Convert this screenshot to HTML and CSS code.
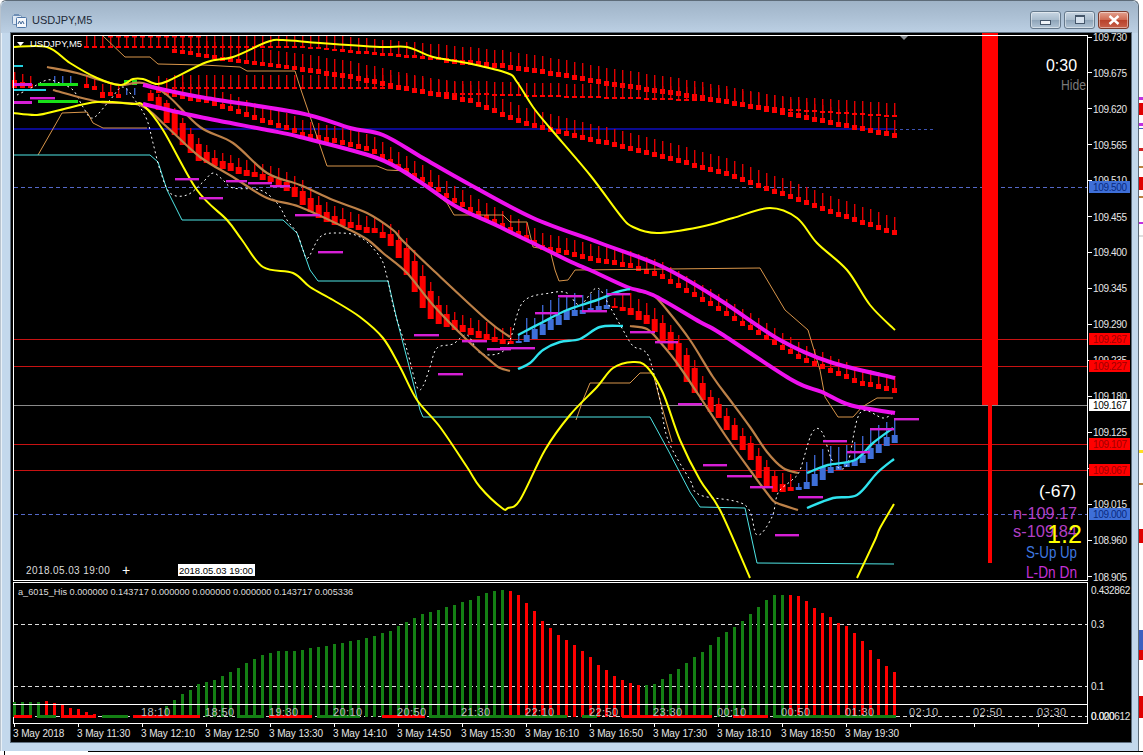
FILE: index.html
```html
<!DOCTYPE html>
<html lang="en">
<head>
<meta charset="utf-8">
<title>USDJPY,M5</title>
<link rel="stylesheet" href="styles.css">
</head>
<body>
<div class="desk">
  <div class="window">
    <header class="titlebar">
      <svg class="app-icon" viewBox="0 0 15 15" width="15" height="15" aria-hidden="true">
        <rect x="0.5" y="2.5" width="9" height="9" rx="1" fill="#dfe9f4" stroke="#6f8fb5"/>
        <rect x="4.5" y="4.5" width="10" height="10" rx="1" fill="#f5f8fc" stroke="#4f76a6"/>
        <path d="M2 1h5v2H2z" fill="#6f8fb5"/>
        <path d="M6 11l1.5-3 1.5 3 1.5-3 1.5 3" fill="none" stroke="#3f6797" stroke-width="1"/>
      </svg>
      <span class="title">USDJPY,M5</span>
      <div class="controls">
        <button class="ctl"><span class="glyph-min"></span></button>
        <button class="ctl"><span class="glyph-max"></span></button>
        <button class="ctl ctl-close"><svg viewBox="0 0 12 10" width="12" height="10" aria-hidden="true"><path d="M1.5 1l9 8M10.5 1l-9 8" stroke="#fff" stroke-width="2.4" fill="none"/></svg></button>
      </div>
    </header>
    <main class="chart">
      <svg id="main" class="pane" width="1120" height="548" viewBox="11 33 1120 548"></svg>
      <svg id="sub" class="pane" width="1120" height="161" viewBox="11 581 1120 161"></svg>
    </main>
  </div>
  <svg id="peek" class="peek" width="4" height="751" viewBox="1139 0 4 751" aria-hidden="true"></svg>
</div>
<div class="bottom-strip"><span class="strip-box"></span><span class="strip-line"></span></div>
<script src="chart.js"></script>
</body>
</html>
```
FILE: styles.css
```css
html, body { margin: 0; padding: 0; background: #fff; }
body { width: 1143px; height: 755px; overflow: hidden; font-family: "Liberation Sans", Arial, sans-serif; }
.desk { display: flex; height: 751px; }
.window {
  width: 1139px; box-sizing: border-box; height: 751px;
  padding: 0 7px 8px 10px;
  background: #c3d8ec;
  border: 1px solid #5d6b78; border-bottom: 0; border-radius: 6px 6px 0 0;
  box-shadow: inset 1px 1px 0 #e8f0f7;
  border-left-color: #b9c4cf;
}
.titlebar {
  height: 32px; margin: 0 -7px 0 -10px; padding: 0 9px 0 11px;
  display: flex; align-items: center; gap: 5px;
  background: linear-gradient(180deg, #9fb3c7 0%, #aec2d6 55%, #bcd0e4 100%);
  border-radius: 6px 6px 0 0;
}
.app-icon { margin-top: 7px; }
.title { font-size: 11px; color: #1d2a38; margin-top: 6px; }
.controls { margin-left: auto; display: flex; gap: 3px; margin-top: 5px; }
.ctl {
  width: 31px; height: 18px; padding: 0; display: flex; align-items: center; justify-content: center;
  border: 1px solid #65798c; border-radius: 3px;
  background: linear-gradient(180deg, #c8d6e3 0%, #a9bccd 48%, #8fa5b9 52%, #b2c5d6 100%);
  box-shadow: inset 0 0 0 1px rgba(255,255,255,.45);
}
.ctl-close { background: linear-gradient(180deg, #e3a18f 0%, #cf6a52 48%, #b8412b 52%, #c8604a 100%); border-color: #7a3a2c; }
.glyph-min { display: block; width: 9px; height: 3px; margin-top: 5px; background: #eef3f8; border: 1px solid #44566a; }
.glyph-max { display: block; width: 8px; height: 6px; border: 1px solid #44566a; border-top-width: 2px; background: #d6e2ee; }
.chart { background: #000; height: 709px; width: 1120px; display: flex; flex-direction: column; outline: 1px solid #5f6f7f; }
.pane { display: block; flex: none; }
.peek { flex: none; }
.bottom-strip { display: flex; align-items: flex-start; height: 4px; background: #fff; }
.strip-box { width: 5px; height: 4px; border-right: 1px solid #000; box-sizing: border-box; }
.strip-line { flex: 1; margin-left: 83px; height: 1px; background: #000; }

/* chart shapes */
.line { fill: none; stroke-linejoin: round; stroke-linecap: butt; }
.magenta { stroke: #ee11ee; stroke-width: 4; }
.yellow { stroke: #ffff00; stroke-width: 2; }
.tan { stroke: #bd8148; stroke-width: 2.2; }
.orange { stroke: #d8954a; stroke-width: 1; }
.tealthin { stroke: #4fe5e5; stroke-width: 1; }
.cyan { stroke: #2fe3ee; stroke-width: 2.4; }
.dots { stroke: #fff; stroke-width: 1; stroke-dasharray: 2 3; }
.bar { fill: #ff0000; }
.wick { fill: #e00000; }
.blue { fill: #3e6fd8; }
.bluewick { fill: #3a62c8; }
.dash { fill: #d61fd6; }
.green { fill: #148014; }
.brightgreen { fill: #18e018; }
.cyanfill { fill: #22d0e0; }
.frame { fill: #fff; }
.rl { stroke: #c81212; stroke-width: 1; shape-rendering: crispEdges; }
.gl { stroke: #8a8a8a; stroke-width: 1; shape-rendering: crispEdges; }
.bd { stroke: #5468c8; stroke-width: 1; stroke-dasharray: 4 3; shape-rendering: crispEdges; }
.navy { stroke: #0a0a90; stroke-width: 2; shape-rendering: crispEdges; }
.navyd { stroke: #3c52b0; stroke-width: 1; stroke-dasharray: 3 3; }
.wd { stroke: #ddd; stroke-width: 1; stroke-dasharray: 4 3; shape-rendering: crispEdges; }
.tick { stroke: #fff; stroke-width: 1; shape-rendering: crispEdges; }
.tri { fill: #8a8f94; }

/* chart text */
.t { font-family: "Liberation Sans", Arial, sans-serif; font-size: 10px; fill: #e6e6e6; }
.t-price { letter-spacing: -0.35px; }
.t-axis { letter-spacing: -0.1px; }
.t-grid { fill: #bdbdbd; font-size: 11px; letter-spacing: .4px; }
.t-sym { fill: #fff; font-size: 9.5px; }
.t-ind { fill: #ddd; font-size: 9.2px; }
.t-tag { fill: #000; letter-spacing: -0.35px; }
.t-tagr { fill: #a00000; letter-spacing: -0.35px; }
.t-tagb { fill: #0a2a80; letter-spacing: -0.35px; }
.t-w { fill: #ddd; font-size: 10px; letter-spacing: .4px; }
.t-box { fill: #000; font-size: 9.5px; }
.plus { fill: #fff; font-size: 14px; }
.b { font-family: "Liberation Sans", sans-serif; font-size: 17px; }
.b-w { fill: #fff; }
.b-h { fill: #7a7a7a; font-size: 15px; }
.b-p { fill: #b23fc4; }
.b-u { fill: #3f78e0; }
.b-d { fill: #c531d6; }
.b-y { fill: #ffff00; font-size: 25px; }
```
FILE: chart.js
```js
var NS = 'http://www.w3.org/2000/svg';
var main = document.getElementById('main');
var sub = document.getElementById('sub');
var peek = document.getElementById('peek');

function add(p, tag, cls, attrs, text) {
  var e = document.createElementNS(NS, tag);
  if (cls) e.setAttribute('class', cls);
  for (var k in attrs) e.setAttribute(k, attrs[k]);
  if (text !== undefined) e.textContent = text;
  p.appendChild(e);
  return e;
}
function rect(p, cls, x, y, w, h) { return add(p, 'rect', cls, { x: x, y: y, width: w, height: h }); }
function hline(p, cls, x1, x2, y) { return add(p, 'line', cls, { x1: x1, x2: x2, y1: y, y2: y }); }
function poly(p, cls, pts) {
  return add(p, 'polyline', 'line ' + cls, { points: pts.map(function (q) { return q[0] + ',' + q[1]; }).join(' ') });
}
/* Catmull-Rom smoothing for the moving-average curves */
function curve(p, cls, pts) {
  var d = 'M' + pts[0][0] + ' ' + pts[0][1];
  for (var i = 0; i < pts.length - 1; i++) {
    var a = pts[i - 1] || pts[i], b = pts[i], c = pts[i + 1], e = pts[i + 2] || c;
    d += 'C' + (b[0] + (c[0] - a[0]) / 6).toFixed(1) + ' ' + (b[1] + (c[1] - a[1]) / 6).toFixed(1) + ' ' +
      (c[0] - (e[0] - b[0]) / 6).toFixed(1) + ' ' + (c[1] - (e[1] - b[1]) / 6).toFixed(1) + ' ' + c[0] + ' ' + c[1];
  }
  return add(p, 'path', 'line ' + cls, { d: d });
}
function text(p, cls, x, y, s, len) {
  var a = { x: x, y: y };
  if (len) { a.textLength = len; a.lengthAdjust = 'spacingAndGlyphs'; }
  return add(p, 'text', cls, a, s);
}
function interp(pts, x) {
  if (x <= pts[0][0]) return pts[0][1];
  for (var i = 1; i < pts.length; i++) {
    if (x <= pts[i][0]) {
      var a = pts[i - 1], b = pts[i];
      return a[1] + (b[1] - a[1]) * (x - a[0]) / (b[0] - a[0]);
    }
  }
  return pts[pts.length - 1][1];
}
function cx(k) { return 14 + 8 * k; }

/* ---------- horizontal levels ---------- */
hline(main, 'navy', 13, 894, 129);
hline(main, 'navyd', 894, 936, 129.5);
hline(main, 'bd', 14, 1087, 187.5);
hline(main, 'bd', 14, 1087, 514.5);
[339.5, 366.5, 444.5, 470.5].forEach(function (y) { hline(main, 'rl', 14, 1087, y); });
hline(main, 'gl', 14, 1087, 405.5);

/* ---------- fractal rows of small candles ---------- */
function row(pts, k0, k1, bh, wick) {
  for (var k = k0; k <= k1; k++) {
    var x = cx(k), y = Math.round(interp(pts, x + .5));
    var h = typeof bh === 'function' ? bh(x) : bh;
    var top = Math.max(36, y - wick);
    rect(main, 'wick', x, top, 1.4, y - top);
    rect(main, 'bar', x - 2, y, 5, h);
  }
}
row([[85, 46], [300, 46], [400, 54], [500, 63], [560, 72], [614, 82], [650, 87], [720, 98], [773, 108], [894, 133]],
  9, 110, function (x) { return x < 340 ? 2 : (x < 440 ? 3 : 5); }, 13);
for (var q = 12; q < 24; q++) rect(main, 'bar', cx(q) - 2, 36, 5, 1.5);
row([[170, 87], [410, 87], [430, 92], [620, 97], [660, 98], [720, 100], [780, 108], [894, 115]],
  20, 110, 2, 12);
row([[170, 48], [230, 58], [300, 67], [345, 73], [400, 85], [470, 98], [517, 118], [550, 127], [613, 142], [667, 155], [733, 173], [773, 188], [833, 210], [894, 230]],
  20, 110, function (x) { return x < 300 ? 4 : 5; }, 13);
row([[150, 85], [180, 94], [206, 98], [233, 107], [263, 118], [287, 125], [303, 132], [343, 140], [373, 148], [400, 165], [423, 177], [447, 193], [470, 207], [493, 218], [517, 230], [543, 245], [567, 250], [593, 257], [630, 263], [660, 273], [700, 295], [750, 325], [800, 355], [860, 380], [894, 388]],
  18, 110, 5, 12);

/* ---------- price candles ---------- */
var reds = [
  [150,93,101,90],[158,97,110,94],[166,103,123,100],[174,112,135,108],[182,123,145,118],[190,134,153,128],[198,144,161,138],
  [206,152,163,145],[214,158,166,150],[222,161,169,153],[230,163,171,155],[238,167,174,158],[246,170,176,160],[254,172,177,162],
  [262,174,180,164],[270,176,182,166],[278,179,186,168],[286,182,191,172],[294,187,197,176],[302,191,205,180],[310,198,212,188],
  [318,205,218,196],[326,212,222,202],[334,216,225,206],[342,219,226,208],[350,222,228,212],[358,225,230,214],[366,227,233,216],
  [374,228,233,218],[382,232,238,222],[390,234,246,224],[398,240,258,230],[406,248,275,238],[414,261,292,250],[422,276,308,265],
  [430,291,319,282],[438,305,324,296],[446,314,327,305],[454,320,330,312],[462,325,332,315],[470,328,335,318],[478,331,338,320],
  [486,334,340,322],[494,337,342,326],[502,339,344,328],[510,341,344,327],
  [614,306,308,298],[622,307,311,293],[630,308,315,293],[638,311,320,299],[646,315,324,303],[654,319,332,308],[662,323,342,315],
  [670,332,350,325],[678,343,367,335],[686,355,382,348],[694,368,393,360],[702,383,400,376],[710,397,412,390],[718,404,418,398],
  [726,416,430,408],[734,425,440,418],[742,436,450,428],[750,443,460,436],[758,456,478,448],[766,467,487,460],[774,476,492,470],
  [782,484,492,473],[790,487,491,474]
];
reds.forEach(function (c) {
  rect(main, 'wick', c[0], c[3], 1.4, c[1] - c[3]);
  rect(main, 'bar', c[0] - 2.3, c[1], 6, c[2] - c[1]);
});
var blues = [
  [518,341,343,335],[526,335,342,318],[534,329,339,318],[542,324,335,305],[550,319,330,300],[558,315,325,298],[566,310,320,295],
  [574,310,316,293],[582,310,314,295],[590,308,312,294],[598,306,310,290],[606,305,309,289],
  [798,487,490,483],[806,482,489,462],[814,474,486,455],[822,467,480,449],[830,467,473,446],[838,466,470,447],[846,463,467,445],
  [854,460,466,442],[862,455,463,436],[870,448,459,429],[878,444,453,425],[886,437,446,422],[894,435,443,418]
];
blues.forEach(function (c) {
  rect(main, 'bluewick', c[0], c[3], 1.4, c[1] - c[3]);
  rect(main, 'blue', c[0] - 2.3, c[1], 6, c[2] - c[1]);
});
/* early bars near the left edge */
[[14,80,88],[22,82,88],[30,84,88],[86,84,88],[94,86,90],[102,92,98],[110,92,96],[118,94,98]].forEach(function (c) {
  rect(main, 'wick', c[0], c[1] - 8, 1.4, 8);
  rect(main, 'bar', c[0] - 2, c[1], 5, c[2] - c[1]);
});
[54, 62, 70].forEach(function (x) { rect(main, 'bluewick', x, 76, 1.4, 9); });
[126, 134].forEach(function (x) { rect(main, 'bluewick', x, 88, 1.4, 7); rect(main, 'brightgreen', x - 2, 80, 5, 5); });

/* ---------- thin lines ---------- */
poly(main, 'orange', [[38,155],[62,113],[87,112],[93,123],[103,128],[147,128]]);
poly(main, 'orange', [[103,36],[125,57],[150,57],[158,64],[203,65],[240,67],[247,71],[295,71],[300,87],[327,166],[377,166],[387,170],[407,171],[427,187],[447,203],[454,215],[503,215],[510,222],[527,222],[533,247],[550,250],[555,270],[559,281],[568,280],[575,270],[760,268],[785,310],[808,330],[820,370],[825,397],[838,417],[853,417],[862,407],[877,398],[893,398]]);
poly(main, 'orange', [[576,420],[583,400],[590,383],[630,383],[640,373],[653,373],[660,400],[672,442]]);
poly(main, 'tealthin', [[13,155],[150,155],[158,162],[167,190],[182,220],[283,220],[297,233],[310,270],[318,281],[388,281],[397,320],[410,370],[420,410],[423,417],[650,417],[668,450],[690,492],[700,507],[745,508],[757,563],[894,564]]);
curve(main, 'dots', [[17,95],[33,87],[47,80],[57,82],[73,90],[83,107],[93,118],[110,100],[123,87],[137,103],[147,120],[153,143],[160,170],[170,193],[187,195],[203,182],[213,173],[223,180],[233,188],[260,190],[277,203],[287,220],[297,233],[303,250],[308,258],[320,237],[337,233],[360,237],[380,257],[387,277],[395,313],[407,350],[417,387],[423,386],[430,367],[437,348],[453,344],[467,335],[480,353],[500,353],[510,340],[523,302],[550,293],[567,293],[580,305],[597,288],[610,307],[623,330],[633,346],[643,350],[650,360],[660,400],[668,440],[690,480],[700,495],[745,505],[757,535],[772,517],[778,493],[792,480],[800,470],[812,433],[822,432],[833,462],[847,465],[860,413],[883,418],[893,413]]);

/* ---------- thick indicator lines ---------- */
curve(main, 'tan', [[47,67],[77,73],[100,80],[120,85],[143,83],[167,95],[200,127],[233,143],[267,173],[300,185],[333,200],[367,213],[393,230],[402,240],[433,270],[487,320],[510,337]]);
curve(main, 'tan', [[53,90],[100,102],[140,105],[167,127],[200,157],[233,177],[267,198],[300,207],[350,230],[368,240],[383,253],[407,273],[433,305],[467,340],[493,363],[500,368],[510,371]]);
curve(main, 'tan', [[637,291],[653,295],[667,310],[690,340],[713,377],[730,400],[750,427],[767,452],[783,468],[798,473]]);
curve(main, 'tan', [[630,326],[647,329],[660,342],[677,363],[700,397],[725,435],[750,470],[770,497],[777,503],[798,510]]);
curve(main, 'yellow', [[13,47],[47,47],[70,63],[97,78],[120,85],[133,79],[143,79],[157,84],[170,80],[207,62],[233,57],[267,42],[283,40],[320,43],[380,47],[407,47],[433,57],[467,63],[507,73],[517,82],[533,107],[550,128],[590,175],[620,215],[633,227],[657,233],[700,227],[733,218],[770,208],[797,218],[817,243],[847,270],[870,305],[895,330]]);
curve(main, 'yellow', [[13,113],[37,115],[60,110],[97,102],[133,104],[143,105],[163,130],[197,190],[227,220],[242,240],[263,267],[293,273],[310,287],[333,300],[360,317],[383,338],[400,367],[417,400],[440,427],[467,467],[480,487],[502,508],[508,508],[520,500],[545,450],[570,415],[597,387],[613,368],[633,362],[647,367],[663,393],[680,440],[700,480],[720,510],[750,578]]);
curve(main, 'yellow', [[857,578],[875,540],[880,528],[894,504]]);
curve(main, 'magenta', [[143,85],[200,97],[300,113],[350,128],[383,135],[423,158],[467,183],[533,218],[600,243],[663,267],[720,300],[780,340],[830,362],[895,378]]);
curve(main, 'magenta', [[143,104],[200,117],[267,130],[300,137],[377,158],[417,180],[457,207],[500,227],[567,260],[590,270],[627,287],[653,295],[700,322],[720,333],[792,380],[822,392],[850,405],[895,413]]);
curve(main, 'cyan', [[518,335],[543,322],[567,310],[597,300],[617,292],[630,289]]);
curve(main, 'cyan', [[518,369],[530,363],[543,350],[560,342],[580,339],[600,327],[623,326]]);
curve(main, 'cyan', [[807,473],[828,465],[855,460],[873,443],[893,428]]);
curve(main, 'cyan', [[807,508],[833,498],[857,495],[877,473],[894,459]]);

/* ---------- short purple level dashes ---------- */
[[175,199,179],[199,223,198],[226,247,181],[248,272,183],[270,290,186],[295,320,215],[318,343,252],[414,439,335],[438,463,374],[462,487,341],[487,511,349],[500,535,348],[535,558,313],[558,582,296],[582,607,311],[607,630,294],[630,655,332],[655,678,342],[678,702,404],[703,727,465],[727,752,476],[750,773,487],[775,799,535],[798,823,497],[823,847,441],[847,870,452],[870,894,429],[894,919,419],[30,55,98]].forEach(function (d) {
  rect(main, 'dash', d[0], d[2] - 1, d[1] - d[0], 2.4);
});
rect(main, 'dash', 14, 83, 18, 3);
rect(main, 'dash', 14, 101, 18, 3);
rect(main, 'brightgreen', 38, 83, 40, 3);
rect(main, 'brightgreen', 38, 100, 40, 3);
rect(main, 'cyanfill', 14, 65, 9, 2);
rect(main, 'cyanfill', 14, 89, 32, 2);

/* ---------- big signal bar ---------- */
rect(main, 'bar', 982, 33, 16, 372);
rect(main, 'bar', 988, 405, 4, 158);

/* ---------- price scale ---------- */
rect(main, 'frame', 13, 35, 1075, 1);
rect(main, 'frame', 13, 35, 1, 546);
rect(main, 'frame', 1087, 35, 1, 546);
rect(main, 'frame', 13, 580, 1075, 1);
var prices = ['109.730','109.675','109.620','109.565','109.510','109.455','109.400','109.345','109.290','109.235','109.180','109.125','109.070','109.015','108.960','108.905'];
var py = [37, 72.5, 108.5, 144.5, 180, 216.5, 252, 288, 324, 360, 396, 432, 468, 504, 540, 576.5];
prices.forEach(function (p, i) {
  hline(main, 'tick', 1088, 1092, Math.floor(py[i]) + .5);
  text(main, 't t-price', 1093, py[i] + 4, p);
});
[[187, 'blue', 't t-tagb', '109.500'], [339, 'bar', 't t-tagr', '109.267'], [366, 'bar', 't t-tagr', '109.227'],
 [405, 'frame', 't t-tag', '109.167'], [444, 'bar', 't t-tagr', '109.107'], [470, 'bar', 't t-tagr', '109.067'],
 [514, 'blue', 't t-tagb', '109.000']].forEach(function (t) {
  rect(main, t[1], 1089, t[0] - 6, 41, 12);
  text(main, t[2], 1093, t[0] + 4, t[3]);
});

/* ---------- chart annotations ---------- */
add(main, 'polygon', 'tri', { points: '900,36 908,36 904,40' });
add(main, 'polygon', 'frame', { points: '17,42 24,42 20.5,46' });
text(main, 't t-sym', 30, 47, 'USDJPY,M5');
text(main, 'b b-w', 1046, 71, '0:30', 31);
text(main, 'b b-h', 1061, 90, 'Hide', 25);
text(main, 'b b-w', 1039, 497, '(-67)', 37);
text(main, 'b b-p', 1013, 519, 'n-109.17', 64);
text(main, 'b b-p', 1013, 537, 's-109.84', 64);
text(main, 'b b-y', 1047, 543, '1.2', 35);
text(main, 'b b-u', 1026, 558, 'S-Up Up', 51);
text(main, 'b b-d', 1026, 578, 'L-Dn Dn', 51);
text(main, 't t-w', 26, 574, '2018.05.03 19:00');
text(main, 't plus', 122, 575, '+');
rect(main, 'frame', 178, 564, 77, 12);
text(main, 't t-box', 179, 574, '2018.05.03 19:00');

/* ---------- oscillator pane ---------- */
rect(sub, 'frame', 13, 582, 1075, 1);
rect(sub, 'frame', 13, 582, 1, 142);
rect(sub, 'frame', 1087, 582, 1, 142);
hline(sub, 'wd', 14, 1087, 624.5);
hline(sub, 'wd', 14, 1087, 686.5);
hline(sub, 'wd', 14, 1087, 716.5);
var tops = {0:702,1:702,2:702,3:702,14:716,15:716,16:716,17:716,18:716,19:706,20:700,21:694,22:690,23:684,24:682,25:680,26:676,27:672,28:668,29:663,30:659,31:655,32:653,33:651,34:651,35:651,36:650,37:648,38:647,39:646,40:644,41:643,42:641,43:640,44:638,45:636,46:633,47:631,48:626,49:622,50:618,51:614,52:612,53:610,54:607,55:605,56:602,57:600,58:596,59:593,60:591,61:590,79:685,80:684,81:679,82:674,83:669,84:663,85:657,86:652,87:645,88:637,89:632,90:627,91:621,92:614,93:607,94:600,95:595,96:595};
var redTops = {4:701,5:703,6:705,7:708,8:709,9:712,10:714,62:591,63:595,64:603,65:611,66:621,67:628,68:635,69:640,70:645,71:651,72:657,73:665,74:670,75:676,76:680,77:683,78:685,97:595,98:596,99:601,100:608,101:613,102:617,103:623,104:626,105:633,106:641,107:650,108:659,109:666,110:672};
function bars(map, cls) {
  Object.keys(map).forEach(function (k) {
    var x = 13 + 8 * k;
    rect(sub, cls, x, map[k], 3, 717 - map[k]);
  });
}
bars(tops, 'green');
bars(redTops, 'bar');
[[14,32,'bar'],[37,56,'green'],[61,96,'bar'],[102,128,'green'],[133,200,'bar'],[237,264,'green'],[269,312,'bar'],[317,360,'green'],[382,425,'bar'],[429,567,'green'],[582,597,'green'],[622,712,'bar'],[733,768,'bar'],[773,896,'green']].forEach(function (s) {
  rect(sub, s[2], s[0], 715, s[1] - s[0], 3);
});
rect(sub, 'frame', 13, 704, 1075, 1);
rect(sub, 'frame', 13, 723, 1075, 1);
['18:10','18:50','19:30','20:10','20:50','21:30','22:10','22:50','23:30','00:10','00:50','01:30','02:10','02:50','03:30'].forEach(function (s, i) {
  text(sub, 't t-grid', 141 + 64 * i, 716, s);
});
var days = ['3 May 2018','3 May 11:30','3 May 12:10','3 May 12:50','3 May 13:30','3 May 14:10','3 May 14:50','3 May 15:30','3 May 16:10','3 May 16:50','3 May 17:30','3 May 18:10','3 May 18:50','3 May 19:30'];
days.forEach(function (s, i) {
  var x = 14 + 64 * i;
  add(sub, 'line', 'tick', { x1: x + .5, x2: x + .5, y1: 723, y2: 727 });
  text(sub, 't t-axis', x - 1, 737, s);
});
[910, 974, 1038].forEach(function (x) { add(sub, 'line', 'tick', { x1: x + .5, x2: x + .5, y1: 723, y2: 727 }); });
text(sub, 't t-price', 1091, 594, '0.432862');
text(sub, 't t-price', 1091, 628, '0.3');
text(sub, 't t-price', 1091, 690, '0.1');
text(sub, 't t-price', 1091, 720, '0.020612');
text(sub, 't t-price', 1091, 720, '0.000');
text(sub, 't t-ind', 18, 595, 'a_6015_His 0.000000 0.143717 0.000000 0.000000 0.000000 0.143717 0.005336');

/* ---------- neighbouring window peeking out at the right edge ---------- */
[[97,3,'#c030e0'],[103,12,'#e00000'],[123,3,'#c030e0'],[128,1,'#3c60c0'],[148,3,'#d02020'],[166,2,'#b98040'],[177,13,'#e00000'],[196,2,'#b98040'],[222,2,'#c030e0'],[235,2,'#ddd'],[450,3,'#ffe020'],[483,2,'#b98040'],[529,14,'#e00000'],[630,20,'#3c60c0'],[650,10,'#e00000'],[696,22,'#e00000']].forEach(function (b) {
  rect(peek, '', 1139, b[0], 4, b[1]).setAttribute('fill', b[2]);
});
```
